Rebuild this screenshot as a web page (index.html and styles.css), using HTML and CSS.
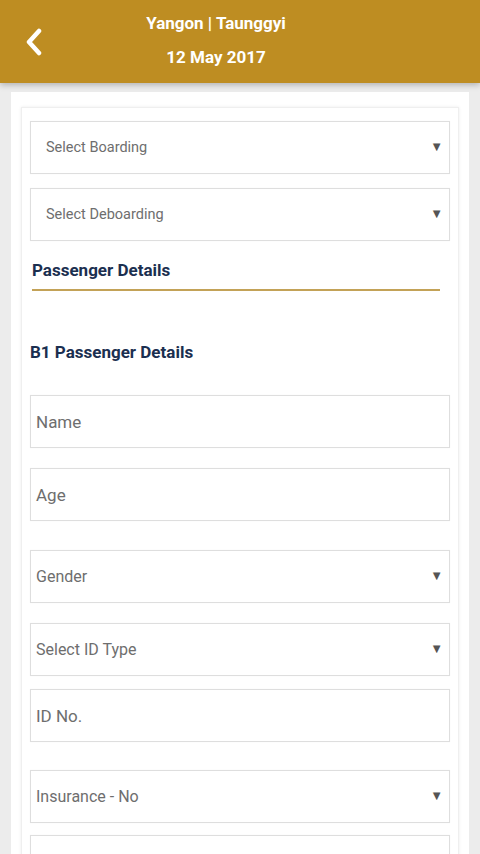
FILE: index.html
```html
<!DOCTYPE html>
<html>
<head>
<meta charset="utf-8">
<link rel="stylesheet" href="styles.css">
</head>
<body>
<header class="topbar">
  <div class="back">
    <svg width="20" height="28" viewBox="0 0 20 28"><path d="M15 3 L5 14 L15 25" fill="none" stroke="#fff" stroke-width="4.5" stroke-linecap="round" stroke-linejoin="round"/></svg>
  </div>
  <div class="titles">
    <div class="route">Yangon | Taunggyi</div>
    <div class="date">12 May 2017</div>
  </div>
</header>
<main class="page">
  <div class="card">
    <div class="panel">
      <div class="field select small"><span>Select Boarding</span><span class="arrow">▼</span></div>
      <div class="field select small g14"><span>Select Deboarding</span><span class="arrow">▼</span></div>
      <h2 class="section">Passenger Details</h2>
      <div class="rule"></div>
      <h3 class="sub">B1 Passenger Details</h3>
      <div class="field input big g33"><span>Name</span></div>
      <div class="field input big g20"><span>Age</span></div>
      <div class="field select mid g29"><span>Gender</span><span class="arrow">▼</span></div>
      <div class="field select mid g20"><span>Select ID Type</span><span class="arrow">▼</span></div>
      <div class="field input big g13"><span>ID No.</span></div>
      <div class="field select mid g28"><span>Insurance - No</span><span class="arrow">▼</span></div>
      <div class="field input big g12"><span></span></div>
    </div>
  </div>
</main>
</body>
</html>
```

FILE: styles.css
```css
* { box-sizing: border-box; }
html, body { margin: 0; padding: 0; }
body {
  width: 480px;
  height: 854px;
  overflow: hidden;
  background: #ececec;
  font-family: Roboto, "Liberation Sans", Arial, sans-serif;
}
.topbar {
  position: relative;
  z-index: 2;
  height: 83px;
  background: #be8d22;
  display: flex;
  align-items: center;
  box-shadow: 0 2px 6px rgba(0,0,0,0.25);
}
.back {
  width: 68px;
  padding-left: 24px;
  display: flex;
  align-items: center;
}
.titles {
  flex: 1;
  display: flex;
  flex-direction: column;
  align-items: center;
  color: #fff;
  font-weight: 700;
  padding-right: 116px;
  margin-top: -4px;
}
.route { font-size: 17px; line-height: 20px; }
.date { font-size: 17px; line-height: 20px; margin-top: 14px; }
.page {
  padding: 9px 11px 0 11px;
}
.card {
  background: #fff;
  padding: 15px 10px 0 10px;
  height: 780px;
}
.panel {
  border: 1px solid #efefef;
  box-shadow: 0 0 3px rgba(0,0,0,0.08);
  padding: 13px 8px 0 8px;
  height: 760px;
  display: flex;
  flex-direction: column;
}
.field {
  height: 53px;
  border: 1px solid #dedede;
  box-shadow: 0 0 1px rgba(0,0,0,0.06);
  display: flex;
  align-items: center;
  justify-content: space-between;
  color: #6e6e6e;
  flex-shrink: 0;
}
.field.small { font-size: 14.5px; padding: 0 6px 0 15px; }
.field.mid { font-size: 16px; padding: 0 6px 0 5px; }
.field.big { font-size: 17px; padding: 0 6px 0 5px; }
.arrow { font-size: 13px; color: #555; margin-top: -2px; }
.g12 { margin-top: 12px; }
.g13 { margin-top: 13px; }
.g14 { margin-top: 14px; }
.g20 { margin-top: 20px; }
.g28 { margin-top: 28px; }
.g29 { margin-top: 29px; }
.g33 { margin-top: 33px; }
.section {
  margin: 19px 0 0 2px;
  font-size: 17px;
  line-height: 20px;
  font-weight: 700;
  color: #1b2f50;
}
.rule {
  margin: 9px 10px 0 2px;
  height: 2px;
  background: #c3a257;
  flex-shrink: 0;
}
.sub {
  margin: 51px 0 0 0;
  font-size: 17px;
  line-height: 20px;
  font-weight: 700;
  color: #1b2f50;
}
```
